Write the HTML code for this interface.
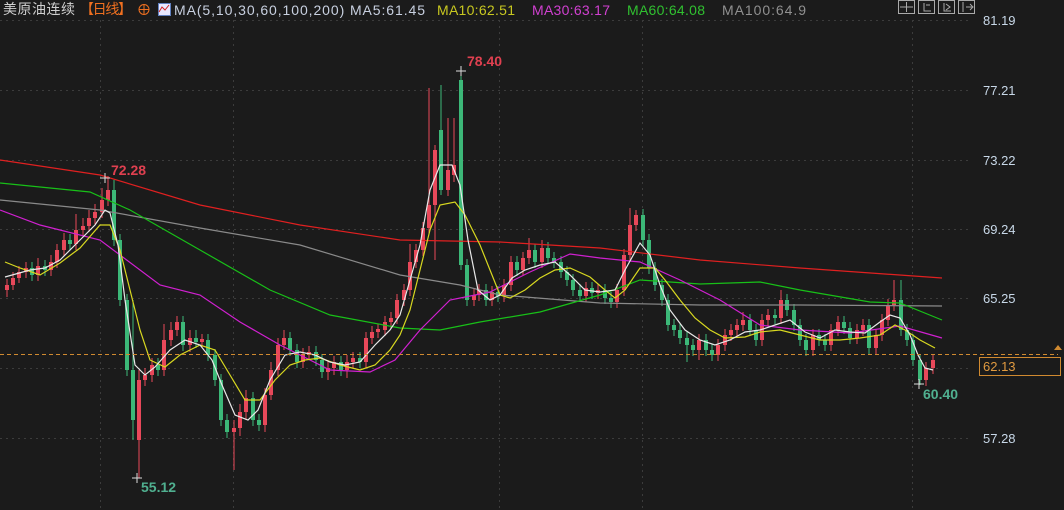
<!DOCTYPE html>
<html><head><meta charset="utf-8"><style>
body{margin:0;background:#1b1b1b;width:1064px;height:510px;overflow:hidden;font-family:"Liberation Sans","Noto Sans CJK SC",sans-serif}
svg{position:absolute;left:0;top:0}
</style></head><body>
<svg width="1064" height="510" xmlns="http://www.w3.org/2000/svg">
<rect width="1064" height="510" fill="#1b1b1b"/>
<g stroke="#3c3c3c" stroke-dasharray="2,4" stroke-width="1">
<line x1="0" y1="20.5" x2="970" y2="20.5"/><line x1="0" y1="90.5" x2="970" y2="90.5"/>
<line x1="0" y1="160.5" x2="970" y2="160.5"/><line x1="0" y1="229.5" x2="970" y2="229.5"/>
<line x1="0" y1="298.5" x2="970" y2="298.5"/><line x1="0" y1="368.5" x2="970" y2="368.5"/>
<line x1="0" y1="438.5" x2="970" y2="438.5"/>
<line x1="100.5" y1="20" x2="100.5" y2="510"/><line x1="233.5" y1="20" x2="233.5" y2="510"/>
<line x1="499.5" y1="20" x2="499.5" y2="510"/><line x1="642.5" y1="20" x2="642.5" y2="510"/>
<line x1="912.5" y1="20" x2="912.5" y2="510"/>
</g>
<path fill="none" stroke="#e8485a" stroke-width="1" d="M7 279V297M13 272V290M19 266V283M26 262V278M38 258V281M51 255V276M57 244V268M64 233V256M76 214V250M83 218V236M89 210V232M95 204V224M102 188V218M108 176V206M139 370V478M145 368V386M152 358V382M164 324V376M171 322V346M177 316V336M190 330V352M202 334V348M234 420V470M240 404V436M246 390V420M265 388V432M271 362V400M278 338V376M284 330V350M303 348V368M309 346V360M328 360V380M334 356V375M347 355V378M353 352V368M366 332V368M372 326V344M378 324V338M385 316V336M391 312V328M397 294V324M404 284V306M410 244V296M416 244V268M423 222V256M429 88V234M435 145V260M448 118V196M454 118V182M474 289V306M479 284V301M492 286V306M504 279V302M511 256V291M523 252V276M529 238V264M542 240V268M586 282V302M598 284V299M617 284V308M624 249V296M630 208V261M636 210V231M699 334V360M718 339V361M725 329V351M731 324V341M737 319V336M743 312V331M762 314V346M768 309V326M781 290V324M813 329V356M831 324V351M838 316V336M857 324V344M863 319V336M876 329V354M882 314V341M888 299V326M894 280V311M926 362V386M933 354V374"/>
<path fill="none" stroke="#e8485a" stroke-width="4" d="M7 285V290M13 278V285M19 272V278M26 268V272M38 266V275M51 262V270M57 250V262M64 240V250M76 230V244M83 226V230M89 218V226M95 212V218M102 200V212M108 190V200M139 380V440M145 375V380M152 365V375M164 340V370M171 330V340M177 322V330M190 338V345M202 339V342M234 428V432M240 412V428M246 398V412M265 395V425M271 370V395M278 345V370M284 338V345M303 355V362M309 352V355M328 368V372M334 362V368M347 362V370M353 358V362M366 338V362M372 332V338M378 329V332M385 322V330M391 318V322M397 300V318M404 290V300M410 262V290M416 250V262M423 228V250M429 205V228M435 150V205M448 170V190M454 165V175M474 295V300M479 290V295M492 292V300M504 285V296M511 262V285M523 258V270M529 250V258M542 248V262M586 288V296M598 290V293M617 290V302M624 255V290M630 225V255M636 215V225M699 340V350M718 345V355M725 335V345M731 330V335M737 325V330M743 320V325M762 320V340M768 315V320M781 300V318M813 335V350M831 330V345M838 322V330M857 330V338M863 325V330M876 335V348M882 320V335M888 305V320M894 300V305M926 368V380M933 360V368"/>
<path fill="none" stroke="#3cb878" stroke-width="1" d="M32 262V281M45 260V276M70 234V250M114 180V246M120 234V306M127 294V376M133 300V440M158 358V376M183 316V351M196 330V348M208 334V361M215 349V386M221 374V426M227 414V438M253 392V426M259 414V431M290 332V356M297 344V368M316 346V366M322 354V378M341 356V376M360 352V368M441 85V195M461 70V270M467 259V306M486 284V306M498 286V302M517 256V276M535 244V268M548 242V264M554 252V268M561 256V278M567 266V286M573 274V296M580 284V302M592 282V299M605 284V304M611 292V308M643 209V246M649 234V274M655 262V291M662 279V306M668 294V331M674 319V336M680 324V344M687 332V362M693 339V356M706 334V356M712 344V361M750 314V336M756 324V346M775 309V324M787 294V316M794 304V331M800 319V346M806 334V356M819 329V346M825 334V351M844 316V334M850 322V344M869 319V354M901 280V336M907 324V346M913 334V366M920 354V385"/>
<path fill="none" stroke="#3cb878" stroke-width="4" d="M32 268V275M45 266V270M70 240V244M114 190V240M120 240V300M127 300V370M133 370V420M158 365V370M183 322V345M196 338V342M208 340V355M215 355V380M221 380V420M227 420V432M253 398V420M259 420V425M290 338V350M297 350V362M316 352V360M322 360V372M341 362V370M360 358V362M441 130V190M461 80V265M467 265V300M486 290V300M498 292V296M517 262V270M535 250V262M548 248V258M554 258V262M561 262V272M567 272V280M573 280V290M580 290V296M592 288V293M605 290V298M611 298V302M643 215V240M649 240V268M655 268V285M662 285V300M668 300V325M674 325V330M680 330V338M687 338V345M693 345V350M706 340V350M712 350V355M750 320V330M756 330V340M775 315V318M787 300V310M794 310V325M800 325V340M806 340V350M819 335V340M825 340V345M844 322V328M850 328V338M869 325V348M901 300V330M907 330V340M913 340V360M920 360V380"/>
<g fill="none" stroke-width="1.2">
<polyline stroke="#e02020" points="0,160 100,175 200,205 300,225 400,240 500,242 600,248 700,260 800,268 942,278"/>
<polyline stroke="#8a8a8a" points="0,200 100,210 200,228 300,245 400,275 460,285 500,295 600,303 700,305 800,305 942,306"/>
<polyline stroke="#18c018" points="0,183 90,192 130,210 200,250 270,290 330,315 400,328 440,330 480,322 540,312 600,295 640,280 700,284 760,282 800,290 870,302 900,303 942,320"/>
<polyline stroke="#d020d0" points="0,210 40,225 100,240 160,285 200,295 240,322 280,345 330,370 370,372 395,360 420,330 450,300 490,292 530,272 570,254 600,258 640,262 680,280 720,300 760,325 800,330 850,333 900,326 942,338"/>
<polyline stroke="#d8d820" points="5,262 20,268 40,275 60,263 80,248 100,225 110,225 120,250 130,290 140,330 150,360 165,367 180,355 200,345 215,350 230,375 245,400 260,400 275,380 290,365 305,360 320,358 340,365 360,370 375,365 390,350 400,335 410,310 420,270 430,230 440,205 455,202 465,215 480,245 490,270 500,295 510,298 525,290 540,278 555,270 570,268 590,277 605,290 615,298 625,290 640,268 655,268 665,280 680,300 695,318 710,330 725,338 745,337 760,332 780,330 800,335 820,340 840,340 860,338 880,335 895,325 905,330 920,340 935,348"/>
<polyline stroke="#e8e8e8" points="5,277 30,270 45,268 60,260 75,245 95,225 105,210 110,213 118,245 125,300 135,365 145,375 155,367 170,350 185,340 200,345 212,360 222,385 235,415 248,420 258,410 270,380 285,355 300,352 315,355 330,362 345,365 360,362 375,345 390,330 400,315 410,280 420,245 430,190 440,165 452,165 460,185 468,240 478,290 490,300 500,295 512,278 525,270 540,265 555,262 570,275 585,290 600,292 615,290 625,270 640,243 650,255 660,285 670,310 685,330 700,340 715,345 730,340 745,332 760,330 775,325 790,320 805,332 820,338 835,330 850,332 865,333 880,322 890,315 900,318 910,335 918,355 925,368 933,370"/>
</g>
<line x1="0" y1="354.5" x2="1058" y2="354.5" stroke="#d08a30" stroke-dasharray="4,3"/>
<rect x="979.5" y="357.5" width="81" height="18" fill="#1b1b1b" stroke="#d08a30"/>
<text x="983" y="371" fill="#e09a40" font-size="13">62.13</text>
<polygon points="1054,350 1058,345 1062,350" fill="#d08a30"/>
<g fill="#c8d8e8" font-size="13">
<text x="983" y="25">81.19</text><text x="983" y="95">77.21</text><text x="983" y="165">73.22</text>
<text x="983" y="234">69.24</text><text x="983" y="303">65.25</text><text x="983" y="443">57.28</text>
</g>
<g font-size="14" font-weight="bold">
<text x="467" y="66" fill="#e04050">78.40</text>
<text x="111" y="175" fill="#e04050">72.28</text>
<text x="141" y="492" fill="#50b090">55.12</text>
<text x="923" y="399" fill="#50b090">60.40</text>
</g>
<g stroke="#ddd" stroke-width="1">
<path d="M456 71h10M461 66v10M100 178h10M105 173v10M132 478h10M137 473v10M914 384h10M919 379v10"/>
</g>
<g font-size="14">
<text x="3" y="14" fill="#d0d0d0" textLength="72">美原油连续</text>
<text x="80" y="14" fill="#f07020" textLength="52">【日线】</text>
<circle cx="144" cy="9.5" r="5" fill="none" stroke="#f07020"/><line x1="139" y1="9.5" x2="149" y2="9.5" stroke="#f07020"/><line x1="144" y1="4.5" x2="144" y2="14.5" stroke="#f07020"/>
<rect x="158.5" y="3.5" width="12" height="12" fill="#e8e8ff" stroke="#6080c0"/>
<polyline points="159,12 162,7 165,10 169,5" fill="none" stroke="#d02020"/>
<text x="174" y="15" fill="#c8d0e0" textLength="251">MA(5,10,30,60,100,200) MA5:61.45</text>
<text x="437" y="15" fill="#c8c820" textLength="78">MA10:62.51</text>
<text x="532" y="15" fill="#d040d0" textLength="78">MA30:63.17</text>
<text x="627" y="15" fill="#30c030" textLength="78">MA60:64.08</text>
<text x="722" y="15" fill="#909090" textLength="84">MA100:64.9</text>
</g>
<g fill="none" stroke="#aaa">
<rect x="898.5" y="0.5" width="16" height="13"/><rect x="918.5" y="0.5" width="16" height="13"/>
<rect x="938.5" y="0.5" width="16" height="13"/><rect x="958.5" y="0.5" width="16" height="13"/>
<path d="M906.5 2v10M900 7h13M924 3v8h7M926 5h4M944 3v8h7M946 4l4 3l-4 3M963 2v10M966 7h6M970 4l3 3l-3 3"/>
</g>
</svg>
</body></html>
